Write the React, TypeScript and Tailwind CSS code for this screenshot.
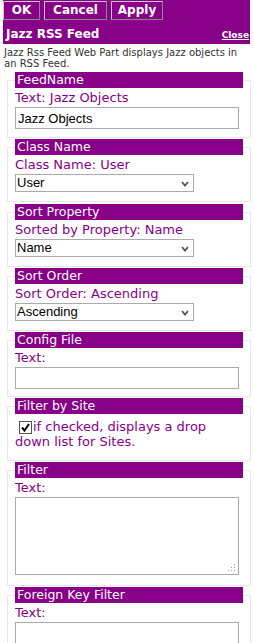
import React from 'react';

const verdana = { fontFamily: '"DejaVu Sans", Verdana, sans-serif' };
const arial = { fontFamily: '"Liberation Sans", Arial, sans-serif' };

const Legend = ({ children }: { children: React.ReactNode }) => (
  <legend className="w-[228px] h-[16px] bg-[#880088] pl-[2px] text-[12.5px] leading-[16px] text-white">
    {children}
  </legend>
);

const Label = ({ children }: { children: React.ReactNode }) => (
  <div className="h-[18px] mb-[1px] pt-[1px] text-[13px] leading-[17px] text-[#880088]">{children}</div>
);

const TextBox = ({ value = '' }: { value?: string }) => (
  <input
    type="text"
    defaultValue={value}
    style={arial}
    className="block w-[224px] h-[22px] border border-[#aaaaaa] bg-white px-[2px] text-[13px] text-black outline-none"
  />
);

const Chevron = () => (
  <svg width="8" height="6" viewBox="0 0 8 6" className="absolute right-[5px] top-[7px] pointer-events-none">
    <path d="M1 1 L4 4.5 L7 1" stroke="#555" strokeWidth="1.8" fill="none" />
  </svg>
);

const Dropdown = ({ value, options }: { value: string; options: string[] }) => (
  <div className="relative w-[179px] h-[18px]">
    <select
      defaultValue={value}
      style={arial}
      className="block w-[179px] h-[18px] appearance-none border border-[#aaaaaa] bg-white pl-[1px] text-[13px] leading-[16px] text-black outline-none"
    >
      {options.map((o) => (
        <option key={o} value={o}>
          {o}
        </option>
      ))}
    </select>
    <Chevron />
  </div>
);

interface SectionProps {
  title: string;
  className: string;
  children: React.ReactNode;
}

const Section = ({ title, className, children }: SectionProps) => (
  <fieldset className={`ml-[7px] w-[243px] border border-[#e8e8e8] px-[7px] ${className}`}>
    <Legend>{title}</Legend>
    {children}
  </fieldset>
);

const App = () => {
  return (
    <div style={verdana} className="w-[254px] h-[643px] overflow-hidden bg-white">
      <div className="ml-[3px] w-[247px] bg-[#880088]">
        <div className="flex gap-[4px] h-[20px] pt-[1px]">
          {[
            { label: 'OK', w: 'w-[37px]' },
            { label: 'Cancel', w: 'w-[63px]' },
            { label: 'Apply', w: 'w-[52px]' },
          ].map((b) => (
            <button
              key={b.label}
              className={`${b.w} h-[19px] border border-t-[#c8c8c8] border-l-[#c8c8c8] border-r-[#8a8a8a] border-b-[#8a8a8a] bg-[#880088] text-[12px] font-bold leading-[17px] text-white`}
            >
              {b.label}
            </button>
          ))}
        </div>
        <div className="flex h-[24px] items-end justify-between pl-[3px] pr-[1px] pb-[3px]">
          <span className="text-[12px] font-bold leading-[14px] text-white">Jazz RSS Feed</span>
          <a href="#" className="text-[9px] font-bold leading-[11px] text-white underline">
            Close
          </a>
        </div>
      </div>

      <p className="pl-[4px] pr-[4px] pt-[3px] pb-[3px] text-[10px] leading-[11px] text-[#333333]">
        Jazz Rss Feed Web Part displays Jazz objects in an RSS Feed.
      </p>

      <Section title="FeedName" className="pb-[8px]">
        <Label>Text: Jazz Objects</Label>
        <TextBox value="Jazz Objects" />
      </Section>

      <Section title="Class Name" className="mt-[1px] pb-[9px]">
        <Label>Class Name: User</Label>
        <Dropdown value="User" options={['User', 'Group', 'Role']} />
      </Section>

      <Section title="Sort Property" className="mt-[2px] pb-[9px]">
        <Label>Sorted by Property: Name</Label>
        <Dropdown value="Name" options={['Name', 'Id', 'Created']} />
      </Section>

      <Section title="Sort Order" className="mt-[1px] pb-[9px]">
        <Label>Sort Order: Ascending</Label>
        <Dropdown value="Ascending" options={['Ascending', 'Descending']} />
      </Section>

      <Section title="Config File" className="mt-[1px] pb-[7px]">
        <Label>Text:</Label>
        <TextBox />
      </Section>

      <Section title="Filter by Site" className="mt-[1px] pb-[11px]">
        <div className="pt-[5px] text-[13px] leading-[15px] text-[#880088]">
          <span className="relative top-[1px] ml-[4px] mr-[1px] inline-flex h-[13px] w-[13px] items-center justify-center border border-[#555555] bg-white align-baseline">
            <svg width="9" height="9" viewBox="0 0 9 9">
              <path d="M1 4.5 L3.5 7.5 L8 1" stroke="#000" strokeWidth="2" fill="none" />
            </svg>
          </span>
          if checked, displays a drop down list for Sites.
        </div>
      </Section>

      <Section title="Filter" className="mt-[1px] pb-[10px]">
        <Label>Text:</Label>
        <div className="relative w-[224px] h-[78px]">
          <textarea
            style={arial}
            className="block w-[224px] h-[78px] resize-none border border-[#aaaaaa] bg-white text-[13px] outline-none"
          />
          <svg width="8" height="8" viewBox="0 0 8 8" className="absolute right-[3px] bottom-[3px] pointer-events-none">
            <rect x="6" y="0" width="1" height="1" fill="#999" />
            <rect x="3" y="3" width="1" height="1" fill="#999" />
            <rect x="6" y="3" width="1" height="1" fill="#999" />
            <rect x="0" y="6" width="1" height="1" fill="#999" />
            <rect x="3" y="6" width="1" height="1" fill="#999" />
            <rect x="6" y="6" width="1" height="1" fill="#999" />
          </svg>
        </div>
      </Section>

      <Section title="Foreign Key Filter" className="mt-[1px] pb-[8px]">
        <Label>Text:</Label>
        <TextBox />
      </Section>
    </div>
  );
};

export default App;
